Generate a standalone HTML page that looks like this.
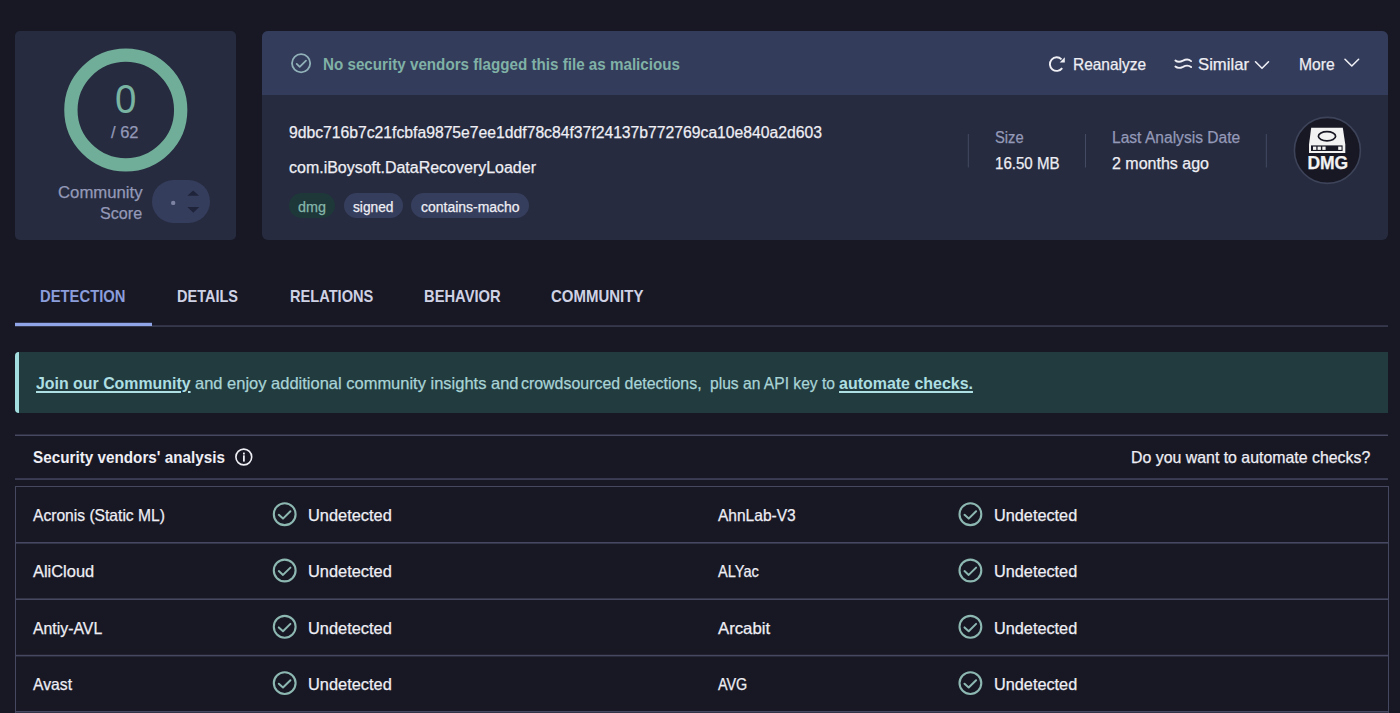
<!DOCTYPE html>
<html><head><meta charset="utf-8">
<style>
html,body{margin:0;padding:0;}
body{width:1400px;height:713px;overflow:hidden;background:#181825;position:relative;font-family:"Liberation Sans",sans-serif;}
.a{position:absolute;}
.t{position:absolute;white-space:pre;line-height:1;transform-origin:0 0;font-family:"Liberation Sans",sans-serif;-webkit-text-stroke:0.25px currentColor;}
svg{position:absolute;overflow:visible;}
</style></head><body>
<!-- left card -->
<div class="a" style="left:15px;top:31px;width:221px;height:209px;border-radius:5px;background:#262b3f"></div>
<svg style="left:0;top:0" width="1400" height="713" viewBox="0 0 1400 713">
  <circle cx="125.8" cy="110" r="54.9" fill="none" stroke="#71ae99" stroke-width="13.3"/>
</svg>
<div class="a" style="left:151.6px;top:179.6px;width:58.2px;height:43.6px;border-radius:22px;background:#353d5d"></div>
<svg style="left:0;top:0" width="1400" height="713" viewBox="0 0 1400 713">
  <circle cx="173.2" cy="202.9" r="2.2" fill="#7d84a3"/>
  <path d="M187.3 195.8 L193.2 190.4 L199.1 195.8 Z" fill="#1f243a"/>
  <path d="M187.3 207 L193.3 212.8 L199.3 207 Z" fill="#1f243a"/>
</svg>
<!-- right card -->
<div class="a" style="left:262px;top:31px;width:1126px;height:209px;border-radius:6px;background:#262b3f;overflow:hidden">
  <div class="a" style="left:0;top:0;width:1126px;height:64px;background:#333c5a"></div>
</div>
<svg style="left:0;top:0" width="1400" height="713" viewBox="0 0 1400 713">
  <!-- header check -->
  <circle cx="301.1" cy="63.3" r="9.1" fill="none" stroke="#91b1b9" stroke-width="1.8"/>
  <path d="M296.7 63.9 L299.7 66.8 L306 60.7" fill="none" stroke="#91b1b9" stroke-width="1.8" stroke-linecap="round" stroke-linejoin="round"/>
  <!-- reanalyze -->
  <path d="M1062.2 68.1 A6.8 6.8 0 1 1 1061.5 59.3" fill="none" stroke="#eeeef4" stroke-width="1.9"/>
  <path d="M1064.8 57.3 L1064.8 62.4 L1059.7 62.4 Z" fill="#eeeef4"/>
  <!-- similar -->
  <path d="M1175.4 60.5 C1177.2 62 1180.2 62.1 1183 60.7 C1185.6 59.3 1188.6 58.9 1191.1 61.1" fill="none" stroke="#eeeef4" stroke-width="1.9" stroke-linecap="round"/>
  <path d="M1175.4 66.6 C1177.2 68.1 1180.2 68.2 1183 66.8 C1185.6 65.4 1188.6 65 1191.1 67.1" fill="none" stroke="#eeeef4" stroke-width="1.9" stroke-linecap="round"/>
  <!-- chevrons -->
  <path d="M1255.5 61.8 L1262 68.3 L1268.5 61.8" fill="none" stroke="#eeeef4" stroke-width="1.6" stroke-linecap="round" stroke-linejoin="round"/>
  <path d="M1345 59.3 L1351.8 66 L1358.6 59.3" fill="none" stroke="#eeeef4" stroke-width="1.6" stroke-linecap="round" stroke-linejoin="round"/>
  <!-- separators -->
  <rect x="967.8" y="134" width="1" height="33.5" fill="#444a62"/>
  <rect x="1085" y="134" width="1" height="33.5" fill="#444a62"/>
  <rect x="1265.8" y="134" width="1" height="33.5" fill="#444a62"/>
  <!-- DMG -->
  <circle cx="1327.4" cy="150.4" r="33" fill="#181825" stroke="#3d4359" stroke-width="1.6"/>
  <path d="M1311.2 127.8 L1342.8 127.8 L1345.3 144.6 L1345.3 153 L1309 153 L1309 144.6 Z" fill="#f2f2f2"/>
  <ellipse cx="1327" cy="136.2" rx="8.6" ry="4.6" fill="none" stroke="#181825" stroke-width="1.7"/>
  <rect x="1311" y="145.4" width="31.6" height="5.6" fill="#181825"/>
  <rect x="1313" y="146.6" width="3.3" height="3.3" fill="#f2f2f2"/>
  <rect x="1317.6" y="146.6" width="3.3" height="3.3" fill="#f2f2f2"/>
  <rect x="1322.3" y="146.6" width="3.3" height="3.3" fill="#f2f2f2"/>
  <rect x="1338.2" y="146.6" width="3.3" height="3.3" fill="#f2f2f2"/>
  <!-- tab line -->
  <rect x="15" y="325.5" width="1373" height="1.1" fill="#4a4d66"/>
  <rect x="15" y="322.8" width="137" height="3.2" fill="#8fa5e8"/>
  <!-- separators lines -->
  <rect x="15" y="434.5" width="1373" height="1.5" fill="#454860"/>
  <rect x="15" y="478.3" width="1373" height="1.5" fill="#454860"/>
  <!-- info icon -->
  <circle cx="243.8" cy="457" r="7.9" fill="none" stroke="#eeeef4" stroke-width="1.6"/>
  <rect x="243" y="452.6" width="1.8" height="1.9" fill="#eeeef4"/>
  <rect x="243" y="455.3" width="1.8" height="6.3" fill="#eeeef4"/>
</svg>
<!-- tags -->
<div class="a" style="left:289px;top:193px;width:46px;height:24.5px;border-radius:13px;background:#1e3739"></div>
<div class="a" style="left:344px;top:193px;width:59.2px;height:24.5px;border-radius:13px;background:#363e5d"></div>
<div class="a" style="left:411.4px;top:193px;width:117.4px;height:24.5px;border-radius:13px;background:#363e5d"></div>
<!-- banner -->
<div class="a" style="left:15px;top:352.3px;width:1373px;height:60.7px;border-radius:4px 0 0 4px;background:#213b3f;overflow:hidden">
  <div class="a" style="left:0;top:0;width:4px;height:61px;background:#a3dde0"></div>
</div>
<!-- table -->
<div class="a" style="left:15px;top:485.6px;width:1374px;height:240px;box-sizing:border-box;border:1.5px solid #454860"></div>
<svg style="left:0;top:0" width="1400" height="713" viewBox="0 0 1400 713">
  <rect x="15" y="542" width="1373" height="1.6" fill="#454860"/>
  <rect x="15" y="598.4" width="1373" height="1.6" fill="#454860"/>
  <rect x="15" y="654.8" width="1373" height="1.6" fill="#454860"/>
  <rect x="15" y="711" width="1373" height="1.6" fill="#454860"/>
  <g id="chk">
    <circle cx="284.7" cy="514.2" r="10.9" fill="none" stroke="#8db8b1" stroke-width="2.1"/>
    <path d="M278.8 514.8 L283 518.6 L290.4 511.3" fill="none" stroke="#8db8b1" stroke-width="2" stroke-linecap="round" stroke-linejoin="round"/>
  </g>
  <use href="#chk" x="685.7" y="0"/>
  <use href="#chk" x="0" y="56.3"/><use href="#chk" x="685.7" y="56.3"/>
  <use href="#chk" x="0" y="112.6"/><use href="#chk" x="685.7" y="112.6"/>
  <use href="#chk" x="0" y="168.9"/><use href="#chk" x="685.7" y="168.9"/>
</svg>
<div class="t" style="left:115.17px;top:78.55px;font-size:41px;font-weight:400;color:#79b3a2;transform:scaleX(0.9363);-webkit-text-stroke:0;">0</div>
<div class="t" style="left:111.20px;top:123.97px;font-size:16.5px;font-weight:400;color:#9499b8;transform:scaleX(0.9985);">/ 62</div>
<div class="t" style="left:57.51px;top:184.47px;font-size:16.5px;font-weight:400;color:#9499b8;transform:scaleX(1.0138);">Community</div>
<div class="t" style="left:100.00px;top:204.57px;font-size:16.5px;font-weight:400;color:#9499b8;transform:scaleX(0.9764);">Score</div>
<div class="t" style="left:323.11px;top:55.98px;font-size:16.5px;font-weight:700;color:#80b1a6;transform:scaleX(0.9204);-webkit-text-stroke:0;">No security vendors flagged this file as malicious</div>
<div class="t" style="left:1072.51px;top:55.98px;font-size:16.5px;font-weight:400;color:#eeeef4;transform:scaleX(0.9361);">Reanalyze</div>
<div class="t" style="left:1198.26px;top:55.98px;font-size:16.5px;font-weight:400;color:#eeeef4;transform:scaleX(1.0113);">Similar</div>
<div class="t" style="left:1298.81px;top:55.98px;font-size:16.5px;font-weight:400;color:#eeeef4;transform:scaleX(0.9494);">More</div>
<div class="t" style="left:288.52px;top:125.40px;font-size:16px;font-weight:400;color:#eeeef4;transform:scaleX(0.9820);">9dbc716b7c21fcbfa9875e7ee1ddf78c84f37f24137b772769ca10e840a2d603</div>
<div class="t" style="left:288.52px;top:160.40px;font-size:16px;font-weight:400;color:#eeeef4;transform:scaleX(0.9989);">com.iBoysoft.DataRecoveryLoader</div>
<div class="t" style="left:298.48px;top:199.90px;font-size:14px;font-weight:400;color:#84b6aa;transform:scaleX(1.0259);">dmg</div>
<div class="t" style="left:353.33px;top:199.90px;font-size:14px;font-weight:400;color:#eeeef4;transform:scaleX(0.9812);">signed</div>
<div class="t" style="left:421.18px;top:199.90px;font-size:14px;font-weight:400;color:#eeeef4;transform:scaleX(0.9971);">contains-macho</div>
<div class="t" style="left:994.92px;top:130.40px;font-size:16px;font-weight:400;color:#9499b8;transform:scaleX(0.9176);">Size</div>
<div class="t" style="left:994.92px;top:156.00px;font-size:16px;font-weight:400;color:#eeeef4;transform:scaleX(0.9427);">16.50 MB</div>
<div class="t" style="left:1111.92px;top:130.40px;font-size:16px;font-weight:400;color:#9499b8;transform:scaleX(0.9737);">Last Analysis Date</div>
<div class="t" style="left:1111.92px;top:156.00px;font-size:16px;font-weight:400;color:#eeeef4;transform:scaleX(1.0001);">2 months ago</div>
<div class="t" style="left:40.49px;top:287.55px;font-size:17px;font-weight:700;color:#8b9edb;transform:scaleX(0.8706);-webkit-text-stroke:0;">DETECTION</div>
<div class="t" style="left:177.49px;top:287.55px;font-size:17px;font-weight:700;color:#cfd2e4;transform:scaleX(0.8538);-webkit-text-stroke:0;">DETAILS</div>
<div class="t" style="left:290.09px;top:287.55px;font-size:17px;font-weight:700;color:#cfd2e4;transform:scaleX(0.8592);-webkit-text-stroke:0;">RELATIONS</div>
<div class="t" style="left:423.79px;top:287.55px;font-size:17px;font-weight:700;color:#cfd2e4;transform:scaleX(0.8670);-webkit-text-stroke:0;">BEHAVIOR</div>
<div class="t" style="left:551.49px;top:287.55px;font-size:17px;font-weight:700;color:#cfd2e4;transform:scaleX(0.8816);-webkit-text-stroke:0;">COMMUNITY</div>
<div class="t" style="left:35.91px;top:374.98px;font-size:16.5px;font-weight:700;color:#aedfe2;transform:scaleX(0.9636);-webkit-text-stroke:0;text-decoration:underline;text-underline-offset:2px;text-decoration-thickness:1.5px;">Join our Community</div>
<div class="t" style="left:194.50px;top:374.98px;font-size:16.5px;font-weight:400;color:#a9d4d6;transform:scaleX(0.9991);">and enjoy additional community insights and</div>
<div class="t" style="left:521.40px;top:374.98px;font-size:16.5px;font-weight:400;color:#a9d4d6;transform:scaleX(0.9652);">crowdsourced detections,</div>
<div class="t" style="left:709.50px;top:374.98px;font-size:16.5px;font-weight:400;color:#a9d4d6;transform:scaleX(0.9462);">plus an API key to</div>
<div class="t" style="left:838.50px;top:374.98px;font-size:16.5px;font-weight:700;color:#aedfe2;transform:scaleX(0.9675);-webkit-text-stroke:0;text-decoration:underline;text-underline-offset:2px;text-decoration-thickness:1.5px;">automate checks.</div>
<div class="t" style="left:32.51px;top:448.98px;font-size:16.5px;font-weight:700;color:#eeeef4;transform:scaleX(0.9251);-webkit-text-stroke:0;">Security vendors' analysis</div>
<div class="t" style="left:1131.21px;top:449.28px;font-size:16.5px;font-weight:400;color:#eeeef4;transform:scaleX(0.9627);">Do you want to automate checks?</div>
<div class="t" style="left:32.91px;top:507.38px;font-size:16.5px;font-weight:400;color:#eeeef4;transform:scaleX(0.9463);">Acronis (Static ML)</div>
<div class="t" style="left:308.11px;top:507.38px;font-size:16.5px;font-weight:400;color:#eeeef4;transform:scaleX(0.9927);">Undetected</div>
<div class="t" style="left:718.11px;top:507.38px;font-size:16.5px;font-weight:400;color:#eeeef4;transform:scaleX(0.9408);">AhnLab-V3</div>
<div class="t" style="left:993.90px;top:507.38px;font-size:16.5px;font-weight:400;color:#eeeef4;transform:scaleX(0.9856);">Undetected</div>
<div class="t" style="left:32.91px;top:563.38px;font-size:16.5px;font-weight:400;color:#eeeef4;transform:scaleX(0.9957);">AliCloud</div>
<div class="t" style="left:308.11px;top:563.38px;font-size:16.5px;font-weight:400;color:#eeeef4;transform:scaleX(0.9927);">Undetected</div>
<div class="t" style="left:718.11px;top:563.38px;font-size:16.5px;font-weight:400;color:#eeeef4;transform:scaleX(0.8834);">ALYac</div>
<div class="t" style="left:993.90px;top:563.38px;font-size:16.5px;font-weight:400;color:#eeeef4;transform:scaleX(0.9856);">Undetected</div>
<div class="t" style="left:32.91px;top:620.08px;font-size:16.5px;font-weight:400;color:#eeeef4;transform:scaleX(0.9591);">Antiy-AVL</div>
<div class="t" style="left:308.11px;top:620.08px;font-size:16.5px;font-weight:400;color:#eeeef4;transform:scaleX(0.9927);">Undetected</div>
<div class="t" style="left:718.11px;top:620.08px;font-size:16.5px;font-weight:400;color:#eeeef4;transform:scaleX(1.0142);">Arcabit</div>
<div class="t" style="left:993.90px;top:620.08px;font-size:16.5px;font-weight:400;color:#eeeef4;transform:scaleX(0.9856);">Undetected</div>
<div class="t" style="left:32.91px;top:675.77px;font-size:16.5px;font-weight:400;color:#eeeef4;transform:scaleX(0.9517);">Avast</div>
<div class="t" style="left:308.11px;top:675.77px;font-size:16.5px;font-weight:400;color:#eeeef4;transform:scaleX(0.9927);">Undetected</div>
<div class="t" style="left:718.11px;top:675.77px;font-size:16.5px;font-weight:400;color:#eeeef4;transform:scaleX(0.8711);">AVG</div>
<div class="t" style="left:993.90px;top:675.77px;font-size:16.5px;font-weight:400;color:#eeeef4;transform:scaleX(0.9856);">Undetected</div>
<div class="t" style="left:1307.4px;top:154.8px;font-size:17.5px;font-weight:700;color:#f2f2f2;transform:scaleX(1.0)">DMG</div>
</body></html>
